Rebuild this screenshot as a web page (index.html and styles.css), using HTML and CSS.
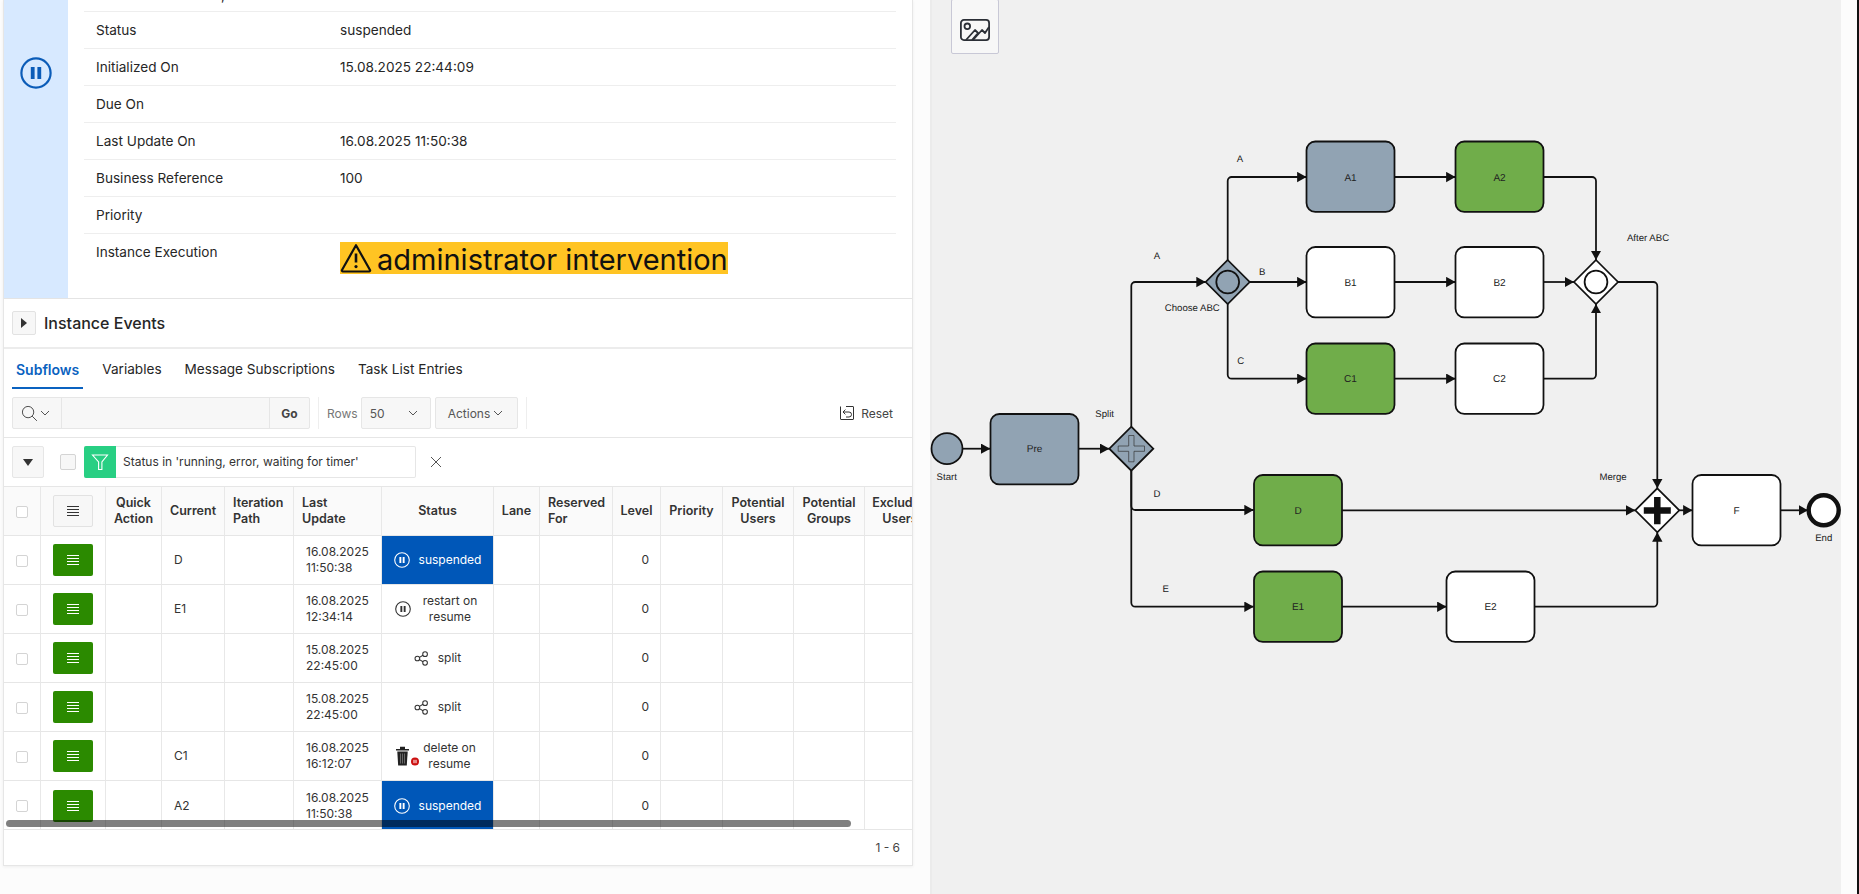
FILE: index.html
```html
<!DOCTYPE html>
<html lang="en">
<head>
<meta charset="utf-8">
<title>Flow Instance</title>
<link rel="stylesheet" href="styles.css">
</head>
<body>
<svg class="defs" width="0" height="0" aria-hidden="true">
  <defs>
    <symbol id="i-pause" viewBox="0 0 16 16"><circle cx="8" cy="8" r="7.3" fill="none" stroke="currentColor" stroke-width="1.1"/><rect x="5.4" y="5" width="1.9" height="6" fill="currentColor"/><rect x="8.7" y="5" width="1.9" height="6" fill="currentColor"/></symbol>
    <symbol id="i-menu" viewBox="0 0 14 14"><path d="M1 2.5h12M1 5.5h12M1 8.5h12M1 11.5h12" fill="none" stroke="currentColor" stroke-width="1.1"/></symbol>
    <symbol id="i-split" viewBox="0 0 16 16" fill="none" stroke="currentColor" stroke-width="1.1"><circle cx="3.6" cy="8" r="2.5"/><circle cx="11.8" cy="3.4" r="2.5"/><circle cx="11.8" cy="12.6" r="2.5"/><path d="M5.8 6.8 9.6 4.6M5.8 9.2l3.8 2.2"/></symbol>
    <symbol id="i-chev" viewBox="0 0 10 6"><path d="M1 1l4 4 4-4" fill="none" stroke="currentColor" stroke-width="1"/></symbol>
    <marker id="arrow" markerUnits="userSpaceOnUse" markerWidth="10" markerHeight="11" refX="9.4" refY="5.2" orient="auto"><path d="M0 0 9.4 5.2 0 10.4z" fill="#111"/></marker>
  </defs>
</svg>

<div class="left">
  <main class="card">
    <section class="summary">
      <div class="side">
        <svg class="side-icon"><use href="#i-pause"/></svg>
      </div>
      <div class="details">
        <div class="stub"><span>,</span></div>
        <div class="drow"><span class="dl">Status</span><span>suspended</span></div>
        <div class="drow"><span class="dl">Initialized On</span><span>15.08.2025 22:44:09</span></div>
        <div class="drow"><span class="dl">Due On</span></div>
        <div class="drow"><span class="dl">Last Update On</span><span>16.08.2025 11:50:38</span></div>
        <div class="drow"><span class="dl">Business Reference</span><span>100</span></div>
        <div class="drow"><span class="dl">Priority</span></div>
        <div class="drow drow-last">
          <span class="dl">Instance Execution</span>
          <span class="amber">
            <svg class="warn" viewBox="0 0 32 30"><path d="M16 2.2 30 27a1 1 0 0 1-.9 1.5H2.9A1 1 0 0 1 2 27z" fill="none" stroke="#111" stroke-width="2.2" stroke-linejoin="round"/><path d="M16 10.5v9" stroke="#111" stroke-width="2.6"/><circle cx="16" cy="23.6" r="1.6" fill="#111"/></svg>
            administrator intervention
          </span>
        </div>
      </div>
    </section>

    <section class="region">
      <button class="toggle"><svg viewBox="0 0 6 10" width="6" height="10"><path d="M0 0l6 5-6 5z" fill="#333"/></svg></button>
      <h2>Instance Events</h2>
    </section>

    <nav class="tabs">
      <a class="tab active">Subflows</a>
      <a class="tab">Variables</a>
      <a class="tab">Message Subscriptions</a>
      <a class="tab">Task List Entries</a>
    </nav>

    <div class="toolbar">
      <div class="search">
        <span class="s-ico">
          <svg width="17" height="17" viewBox="0 0 18 18" fill="none" stroke="#444" stroke-width="1"><circle cx="7.5" cy="7.5" r="6"/><path d="M11.8 11.8l5 5"/></svg>
          <svg class="chev" width="10" height="6"><use href="#i-chev"/></svg>
        </span>
        <span class="s-input"></span>
        <span class="s-go">Go</span>
      </div>
      <span class="tsep"></span>
      <span class="rows-l">Rows</span>
      <span class="rows-s">50<svg class="chev" width="10" height="6"><use href="#i-chev"/></svg></span>
      <span class="actions">Actions<svg class="chev" width="10" height="6"><use href="#i-chev"/></svg></span>
      <span class="tsep"></span>
      <span class="reset">
        <svg width="14" height="14" viewBox="0 0 14 14" fill="none" stroke="#333" stroke-width="1"><path d="M6 .5H13a.5.5 0 0 1 .5.5v12a.5.5 0 0 1-.5.5H1a.5.5 0 0 1-.5-.5V.5"/><path d="M3.2 6H9a2.5 2.5 0 0 1 0 5H6M5.4 3.6 3 6l2.4 2.4"/></svg>
        Reset
      </span>
    </div>

    <div class="filters">
      <button class="f-toggle"><svg width="10" height="7" viewBox="0 0 10 7"><path d="M0 0h10L5 7z" fill="#333"/></svg></button>
      <span class="cb f-cb"></span>
      <div class="f-chip">
        <span class="f-ico"><svg width="18" height="18" viewBox="0 0 18 18" fill="none" stroke="#fff" stroke-width="1.1"><path d="M1.5 2h15l-5.6 7v7.5H7.6V9z"/></svg></span>
        <span class="f-text">Status in 'running, error, waiting for timer'</span>
      </div>
      <svg class="f-x" width="12" height="12" viewBox="0 0 12 12"><path d="M1 1l10 10M11 1L1 11" stroke="#555" stroke-width="1"/></svg>
    </div>

    <div class="grid-wrap">
      <table class="grid">
        <colgroup>
          <col class="w37"><col class="w65"><col class="w56"><col class="w63"><col class="w69"><col class="w88"><col class="w112"><col class="w46"><col class="w73"><col class="w48"><col class="w62"><col class="w71"><col class="w71"><col class="w71">
        </colgroup>
        <thead>
          <tr>
            <th class="ctr"><span class="cb"></span></th>
            <th class="ctr"><span class="mbtn light"><svg width="14" height="14"><use href="#i-menu"/></svg></span></th>
            <th class="ctr">Quick Action</th>
            <th class="ctr">Current</th>
            <th>Iteration Path</th>
            <th>Last<br>Update</th>
            <th class="ctr">Status</th>
            <th class="ctr">Lane</th>
            <th>Reserved For</th>
            <th class="ctr">Level</th>
            <th class="ctr">Priority</th>
            <th class="ctr">Potential Users</th>
            <th class="ctr">Potential Groups</th>
            <th class="ctr">Excluded Users</th>
          </tr>
        </thead>
        <tbody>
          <tr>
            <td class="ctr"><span class="cb"></span></td><td class="ctr"><span class="mbtn"><svg width="14" height="14"><use href="#i-menu"/></svg></span></td><td></td><td>D</td><td></td><td>16.08.2025<br>11:50:38</td>
            <td class="st blue"><div class="stc"><svg class="si"><use href="#i-pause"/></svg><span>suspended</span></div></td>
            <td></td><td></td><td class="num">0</td><td></td><td></td><td></td><td></td>
          </tr>
          <tr>
            <td class="ctr"><span class="cb"></span></td><td class="ctr"><span class="mbtn"><svg width="14" height="14"><use href="#i-menu"/></svg></span></td><td></td><td>E1</td><td></td><td>16.08.2025<br>12:34:14</td>
            <td class="st"><div class="stc"><svg class="si"><use href="#i-pause"/></svg><span class="two">restart on<br>resume</span></div></td>
            <td></td><td></td><td class="num">0</td><td></td><td></td><td></td><td></td>
          </tr>
          <tr>
            <td class="ctr"><span class="cb"></span></td><td class="ctr"><span class="mbtn"><svg width="14" height="14"><use href="#i-menu"/></svg></span></td><td></td><td></td><td></td><td>15.08.2025<br>22:45:00</td>
            <td class="st"><div class="stc"><svg class="si sp"><use href="#i-split"/></svg><span>split</span></div></td>
            <td></td><td></td><td class="num">0</td><td></td><td></td><td></td><td></td>
          </tr>
          <tr>
            <td class="ctr"><span class="cb"></span></td><td class="ctr"><span class="mbtn"><svg width="14" height="14"><use href="#i-menu"/></svg></span></td><td></td><td></td><td></td><td>15.08.2025<br>22:45:00</td>
            <td class="st"><div class="stc"><svg class="si sp"><use href="#i-split"/></svg><span>split</span></div></td>
            <td></td><td></td><td class="num">0</td><td></td><td></td><td></td><td></td>
          </tr>
          <tr>
            <td class="ctr"><span class="cb"></span></td><td class="ctr"><span class="mbtn"><svg width="14" height="14"><use href="#i-menu"/></svg></span></td><td></td><td>C1</td><td></td><td>16.08.2025<br>16:12:07</td>
            <td class="st"><div class="stc">
              <svg class="si del" viewBox="0 0 24 20"><path d="M1 3h13v1.6H1zM5 .8h5V3H5z" fill="#222"/><path d="M2.3 5.4h10.4l-.9 14.2H3.200z" fill="#222"/><path d="M5.500 7.500v10M7.500 7.500v10M9.500 7.500v10" stroke="#777" stroke-width=".8"/><circle cx="20" cy="15.500" r="4" fill="#cc1010"/><path d="M19 13.800v3.400M21 13.800v3.400" stroke="#fff" stroke-width="1"/></svg>
              <span class="two">delete on<br>resume</span></div></td>
            <td></td><td></td><td class="num">0</td><td></td><td></td><td></td><td></td>
          </tr>
          <tr>
            <td class="ctr"><span class="cb"></span></td><td class="ctr"><span class="mbtn"><svg width="14" height="14"><use href="#i-menu"/></svg></span></td><td></td><td>A2</td><td></td><td>16.08.2025<br>11:50:38</td>
            <td class="st blue"><div class="stc"><svg class="si"><use href="#i-pause"/></svg><span>suspended</span></div></td>
            <td></td><td></td><td class="num">0</td><td></td><td></td><td></td><td></td>
          </tr>
        </tbody>
      </table>
      <div class="hscroll"></div>
    </div>
    <div class="pager">1 - 6</div>
  </main>
</div>

<aside class="pane">
  <button class="img-btn">
    <svg width="30" height="22" viewBox="0 0 30 22" fill="none" stroke="#2b2f36" stroke-width="1.800" stroke-linejoin="round"><rect x=".9" y=".9" width="28.200" height="20.200" rx="3"/><circle cx="7.300" cy="7.300" r="2.800"/><path d="M6 21l9-10 3 3-6 7M13 21l9-10 3 3 4-6"/></svg>
  </button>
  <svg class="bpmn" viewBox="930 0 911 894" width="911" height="894">
    <g class="edges">
      <path marker-end="url(#arrow)" d="M963 448.700H990.300"/>
      <path marker-end="url(#arrow)" d="M1078.700 448.700H1109.300"/>
      <path marker-end="url(#arrow)" d="M1131.300 426.700V286a4 4 0 0 1 4-4H1205.700"/>
      <path marker-end="url(#arrow)" d="M1131.300 470.700V506a4 4 0 0 0 4 4H1253.700"/>
      <path marker-end="url(#arrow)" d="M1131.300 470.700V602.700a4 4 0 0 0 4 4H1253.700"/>
      <path marker-end="url(#arrow)" d="M1227.700 260V181a4 4 0 0 1 4-4H1306.500"/>
      <path marker-end="url(#arrow)" d="M1249.700 282H1306.500"/>
      <path marker-end="url(#arrow)" d="M1227.700 304V374.700a4 4 0 0 0 4 4H1306.500"/>
      <path marker-end="url(#arrow)" d="M1394.500 177H1455.500"/>
      <path marker-end="url(#arrow)" d="M1394.500 282H1455.500"/>
      <path marker-end="url(#arrow)" d="M1394.500 378.700H1455.500"/>
      <path marker-end="url(#arrow)" d="M1543.500 177H1592a4 4 0 0 1 4 4V260"/>
      <path marker-end="url(#arrow)" d="M1543.500 282H1574"/>
      <path marker-end="url(#arrow)" d="M1543.500 378.700H1592a4 4 0 0 0 4-4V304"/>
      <path marker-end="url(#arrow)" d="M1618 282H1653.300a4 4 0 0 1 4 4V488.300"/>
      <path marker-end="url(#arrow)" d="M1342 510.300H1635.300"/>
      <path marker-end="url(#arrow)" d="M1679.300 510.300H1692.500"/>
      <path marker-end="url(#arrow)" d="M1780.500 510.300H1808"/>
      <path marker-end="url(#arrow)" d="M1342 606.700H1446.500"/>
      <path marker-end="url(#arrow)" d="M1534.500 606.700H1653.300a4 4 0 0 0 4-4V532.300"/>
    </g>

    <circle class="gray thin" cx="947" cy="448.700" r="15.500"/>
    <circle class="white thick" cx="1823.700" cy="510.300" r="15"/>

    <rect class="node gray"  x="990.500"  y="414"   width="88" height="70.400" rx="8.800"/>
    <rect class="node gray"  x="1306.500" y="141.500" width="88" height="70.400" rx="8.800"/>
    <rect class="node green" x="1455.500" y="141.500" width="88" height="70.400" rx="8.800"/>
    <rect class="node white" x="1306.500" y="247"   width="88" height="70.400" rx="8.800"/>
    <rect class="node white" x="1455.500" y="247"   width="88" height="70.400" rx="8.800"/>
    <rect class="node green" x="1306.500" y="343.500" width="88" height="70.400" rx="8.800"/>
    <rect class="node white" x="1455.500" y="343.500" width="88" height="70.400" rx="8.800"/>
    <rect class="node green" x="1254"    y="475"   width="88" height="70.400" rx="8.800"/>
    <rect class="node green" x="1254"    y="571.500" width="88" height="70.400" rx="8.800"/>
    <rect class="node white" x="1446.500" y="571.500" width="88" height="70.400" rx="8.800"/>
    <rect class="node white" x="1692.500" y="475"   width="88" height="70.400" rx="8.800"/>

    <path class="gray thin" d="M1131.300 426.700 1153.300 448.700 1131.300 470.700 1109.300 448.700z"/>
    <path class="plus-o" d="M1128.700 435.500h5.300v10.500h10.500v5.300h-10.500v10.500h-5.300v-10.500h-10.500v-5.300h10.500z"/>
    <path class="gray thin" d="M1227.700 260 1249.700 282 1227.700 304 1205.700 282z"/>
    <circle class="gray mid" cx="1227.700" cy="282" r="11.400"/>
    <path class="white thin" d="M1596 260 1618 282 1596 304 1574 282z"/>
    <circle class="white mid" cx="1596" cy="282" r="11.400"/>
    <path class="white thin" d="M1657.300 488.300 1679.300 510.300 1657.300 532.300 1635.300 510.300z"/>
    <path class="plus-s" d="M1654.050 497h6.500v10.350h10.250v6.500h-10.250v10.350h-6.500v-10.350h-10.250v-6.500h10.250z"/>

    <g class="ntext">
      <text x="1034.500" y="452.300">Pre</text>
      <text x="1350.500" y="180.500">A1</text>
      <text x="1499.500" y="180.500">A2</text>
      <text x="1350.500" y="285.500">B1</text>
      <text x="1499.500" y="285.500">B2</text>
      <text x="1350.500" y="382.300">C1</text>
      <text x="1499.500" y="382.300">C2</text>
      <text x="1298" y="513.700">D</text>
      <text x="1298" y="610">E1</text>
      <text x="1490.500" y="610">E2</text>
      <text x="1736.500" y="513.700">F</text>
    </g>

    <text x="1240" y="162">A</text>
    <text x="1157" y="259">A</text>
    <text x="1262.300" y="275">B</text>
    <text x="1240.700" y="364">C</text>
    <text x="1192.300" y="311">Choose ABC</text>
    <text x="1104.700" y="416.500">Split</text>
    <text x="946.700" y="480">Start</text>
    <text x="1157" y="497">D</text>
    <text x="1165.700" y="592">E</text>
    <text x="1648" y="241">After ABC</text>
    <text x="1613" y="480">Merge</text>
    <text x="1823.700" y="541">End</text>
  </svg>
</aside>
<div class="edge"></div>
</body>
</html>
```
FILE: styles.css
```css
* { box-sizing: border-box; }
html, body { margin: 0; height: 894px; overflow: hidden; }
body {
  display: flex;
  background: #fcfcfc;
  font-family: Inter, "Liberation Sans", sans-serif;
  font-size: 13.6px;
  color: #262626;
}
.defs { position: absolute; }
.left { width: 930px; padding: 0 17px 0 3px; flex: none; }
.card {
  height: 866px;
  background: #fff;
  border: 1px solid #e6e6e6;
  border-top: 0;
  box-shadow: 0 1px 3px rgba(0,0,0,.06);
}

/* summary */
.summary { display: flex; height: 299px; border-bottom: 1px solid #e4e4e4; }
.side { width: 64px; background: #d7e9ff; flex: none; padding: 57px 0 0 16px; color: #0b5cb8; }
.side-icon { width: 32px; height: 32px; display: block; }
.details { flex: 1; padding: 0 16px 0 16px; }
.stub { height: 12px; border-bottom: 1px solid #eee; padding-left: 137px; line-height: 1px; overflow: hidden; }
.stub span { position: relative; top: -5px; }
.drow { display: flex; height: 37px; align-items: center; border-bottom: 1px solid #eee; padding: 0 0 1px 12px; }
.dl { width: 244px; flex: none; }
.drow-last { align-items: flex-start; border: 0; height: 60px; padding-top: 8px; }
.drow-last .dl { line-height: 20px; }
.amber {
  display: flex; align-items: flex-start; gap: 5px;
  background: #ffc423; color: #111;
  height: 32px; padding-top: 2px; font-size: 29px; line-height: 32px;
}
.warn { width: 32px; height: 30px; flex: none; margin-top: -1px; }

/* region */
.region { height: 50px; display: flex; align-items: center; padding-left: 8px; gap: 8px; border-bottom: 2px solid #ececec; }
.toggle { width: 24px; height: 24px; padding: 0; display: flex; align-items: center; justify-content: center; background: #f7f7f7; border: 1px solid #e2e2e2; border-radius: 2px; }
.region h2 { margin: 0; font-size: 16px; font-weight: 500; }

/* tabs */
.tabs { display: flex; height: 40px; padding-left: 8px; gap: 15px; }
.tab { padding: 12px 4px 0; height: 40px; }
.tab.active { color: #0a62c0; font-size: 14px; font-weight: 600; border-bottom: 2px solid #0a62c0; }

/* toolbar */
.toolbar { display: flex; align-items: stretch; height: 49px; padding: 8px; border-bottom: 1px solid #e6e6e6; font-size: 12px; color: #555; }
.search { display: flex; width: 298px; background: #f7f7f7; border: 1px solid #e6e6e6; border-radius: 2px; }
.s-ico { width: 49px; display: flex; align-items: center; gap: 2px; padding-left: 8px; border-right: 1px solid #e6e6e6; flex: none; }
.s-input { flex: 1; }
.s-go { width: 40px; flex: none; display: flex; align-items: center; justify-content: center; border-left: 1px solid #e6e6e6; font-weight: 700; color: #444; }
.chev { color: #555; flex: none; }
.tsep { width: 1px; background: #eee; margin: 0 8px; flex: none; }
.rows-l { color: #777; display: flex; align-items: center; margin-right: 3px; }
.rows-s, .actions { display: flex; align-items: center; background: #f7f7f7; border: 1px solid #e6e6e6; border-radius: 2px; }
.rows-s { width: 70px; padding: 0 12px 0 8px; justify-content: space-between; margin-right: 4px; }
.actions { width: 83px; padding: 0 12px; justify-content: flex-start; gap: 3px; }
.reset { margin-left: auto; display: flex; align-items: center; gap: 7px; padding-right: 3px; margin-right: 8px; color: #444; }

/* filters */
.filters { display: flex; align-items: center; height: 49px; padding-left: 8px; border-bottom: 1px solid #e6e6e6; font-size: 12px; }
.f-toggle { width: 32px; height: 32px; padding: 0; display: flex; align-items: center; justify-content: center; background: #f7f7f7; border: 1px solid #e6e6e6; border-radius: 2px; }
.cb { display: inline-block; width: 12px; height: 12px; background: #fff; border: 1px solid #d4d4d4; border-radius: 2px; vertical-align: middle; }
.f-cb { width: 16px; height: 16px; background: #f7f7f7; margin: 0 8px 0 16px; }
.f-chip { display: flex; width: 332px; height: 32px; border: 1px solid #e6e6e6; border-left: 0; border-radius: 2px; }
.f-ico { width: 32px; height: 32px; margin-top: -1px; background: #28cf83; border-radius: 2px 0 0 2px; display: flex; align-items: center; justify-content: center; flex: none; }
.f-text { padding-left: 7px; line-height: 30px; color: #333; }
.f-x { margin-left: 14px; }

/* table */
.grid-wrap { position: relative; height: 343px; overflow: hidden; border-bottom: 1px solid #e6e6e6; }
.grid { table-layout: fixed; border-collapse: separate; border-spacing: 0; width: 932px; font-size: 12px; line-height: 16px; color: #333; }
.w37 { width: 37px; } .w65 { width: 65px; } .w56 { width: 56px; } .w63 { width: 63px; }
.w69 { width: 69px; } .w88 { width: 88px; } .w112 { width: 112px; } .w46 { width: 46px; }
.w73 { width: 73px; } .w48 { width: 48px; } .w62 { width: 62px; } .w71 { width: 71px; }
.grid th, .grid td { border-right: 1px solid #e8e8e8; border-bottom: 1px solid #e6e6e6; height: 49px; padding: 0 12px; vertical-align: middle; text-align: left; }
.grid th { background: #fafafa; font-size: 12.5px; font-weight: 600; padding: 0 8px; color: #333; }
.grid tbody tr:last-child td { border-bottom: 0; }
.grid th.ctr, .grid td.ctr { text-align: center; padding: 0; }
.grid td.num { text-align: right; padding-right: 11px; }
.mbtn { display: inline-flex; width: 40px; height: 32px; align-items: center; justify-content: center; vertical-align: middle; background: #2b8a00; color: #fff; border-radius: 2px; }
.mbtn.light { background: #f7f7f7; color: #333; border: 1px solid #e2e2e2; }
.grid td.st { padding: 0; text-align: center; }
.stc { display: flex; align-items: center; justify-content: center; gap: 9px; }
.two { min-width: 61px; }
.si { width: 16px; height: 16px; flex: none; }
.si.sp { width: 15px; height: 15px; }
.si.del { width: 24px; height: 20px; margin-right: -9px; }
.blue { background: #0057b8; color: #fff; }
.grid td.blue { color: #fff; }
.hscroll { position: absolute; left: 2px; top: 333px; width: 845px; height: 7px; border-radius: 4px; background: rgba(0,0,0,.5); }
.pager { height: 35px; line-height: 35px; text-align: right; padding-right: 12px; font-size: 12px; color: #444; }

/* diagram pane */
.pane { position: relative; width: 911px; height: 894px; flex: none; background: #f0f0f0; box-shadow: inset 2px 0 0 #ebebeb; overflow: hidden; }
.bpmn { display: block; overflow: hidden; }
.img-btn { position: absolute; left: 21px; top: -1px; width: 48px; height: 55px; padding: 0; background: #f7f7f7; border: 1px solid #c8c8d6; border-radius: 2px; display: flex; align-items: center; justify-content: center; }
.img-btn svg { margin-top: 7px; }
.edges path { fill: none; stroke: #111; stroke-width: 1.76; }
.node { stroke: #111; stroke-width: 1.76; }
.gray { fill: #91a3b3; }
.green { fill: #70ad4a; }
.white { fill: #fff; }
.thin { stroke: #111; stroke-width: 1.76; }
.mid { stroke: #111; stroke-width: 1.76; }
.thick { stroke: #111; stroke-width: 4.4; }
.plus-o { fill: #91a3b3; stroke: #333; stroke-width: .7; }
.plus-s { fill: #111; }
.bpmn text { font-family: "Liberation Sans", Arial, sans-serif; font-size: 9.6px; fill: #222; text-anchor: middle; text-rendering: geometricPrecision; }
.bpmn .ntext text { font-size: 10px; }

.edge { flex: 1; background: #fcfcfc; border-right: 2px solid #111; }
```
